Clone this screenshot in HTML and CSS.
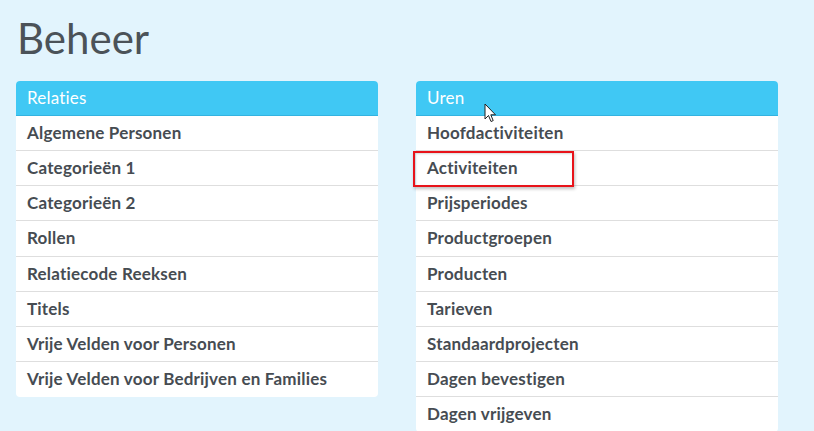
FILE: index.html
```html
<!DOCTYPE html>
<html>
<head>
<meta charset="utf-8">
<link rel="stylesheet" href="styles.css">
</head>
<body>
<h1 class="title">Beheer</h1>
<div class="panels">
  <div class="panel">
    <div class="panel-head">Relaties</div>
    <div class="row">Algemene Personen</div>
    <div class="row">Categorieën 1</div>
    <div class="row">Categorieën 2</div>
    <div class="row">Rollen</div>
    <div class="row">Relatiecode Reeksen</div>
    <div class="row">Titels</div>
    <div class="row">Vrije Velden voor Personen</div>
    <div class="row">Vrije Velden voor Bedrijven en Families</div>
  </div>
  <div class="panel">
    <div class="panel-head">Uren
      <svg class="cursor" width="14" height="21" viewBox="0 0 14 21"><path d="M1 1 L1 16 L4.5 12.5 L7 18.5 L9.2 17.6 L6.8 11.8 L11.5 11.8 Z" fill="#fff" stroke="#222" stroke-width="1" stroke-linejoin="miter"/></svg>
    </div>
    <div class="row">Hoofdactiviteiten</div>
    <div class="row highlight">Activiteiten<span class="mark"></span></div>
    <div class="row">Prijsperiodes</div>
    <div class="row">Productgroepen</div>
    <div class="row">Producten</div>
    <div class="row">Tarieven</div>
    <div class="row">Standaardprojecten</div>
    <div class="row">Dagen bevestigen</div>
    <div class="row">Dagen vrijgeven</div>
  </div>
</div>
</body>
</html>
```
FILE: styles.css
```css
html, body {
  margin: 0;
  padding: 0;
  background: #e2f4fd;
  font-family: Lato, "Open Sans", sans-serif;
  overflow: hidden;
}
.title {
  margin: 0;
  padding: 14px 0 0 17px;
  height: 81px;
  box-sizing: border-box;
  font-size: 42px;
  font-weight: 400;
  color: #4b5258;
  line-height: 48px;
}
.panels {
  display: flex;
  gap: 38px;
  padding-left: 16px;
}
.panel {
  width: 362px;
  background: #fff;
  border-radius: 4px;
  align-self: flex-start;
  padding-bottom: 1px;
}
.panel-head {
  position: relative;
  height: 34px;
  background: #40c8f4;
  border-bottom: 1px solid #33b3e0;
  border-radius: 4px 4px 0 0;
  color: #fff;
  font-size: 17px;
  letter-spacing: 0.2px;
  line-height: 34px;
  padding-left: 11px;
}
.row {
  position: relative;
  height: 34.15px;
  line-height: 34px;
  padding-left: 11px;
  font-size: 17px;
  letter-spacing: 0.2px;
  font-weight: 700;
  color: #464c52;
  border-bottom: 1px solid #dedede;
}
.row:last-child {
  border-bottom: none;
}
.cursor {
  position: absolute;
  left: 68px;
  top: 22px;
}
.mark {
  position: absolute;
  left: -3px;
  top: 0;
  width: 157px;
  height: 32px;
  border: 2px solid #e8131a;
  box-shadow: 1px 2px 3px rgba(0,0,0,0.25), inset 1px 1px 2px rgba(0,0,0,0.15);
}
```
